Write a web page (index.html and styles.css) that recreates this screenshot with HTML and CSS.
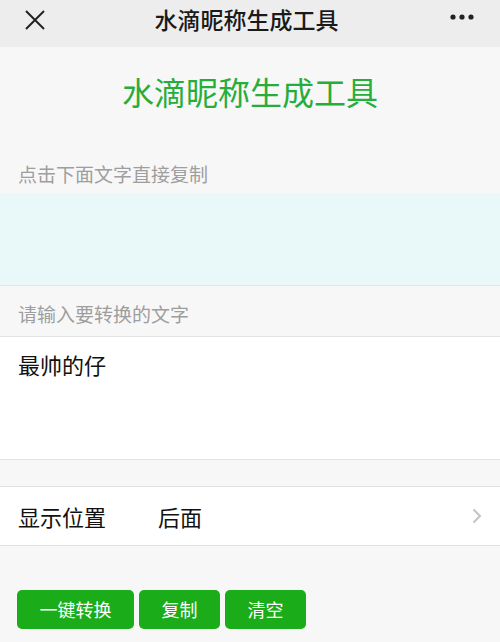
FILE: index.html
```html
<!DOCTYPE html>
<html lang="zh-CN">
<head>
<meta charset="utf-8">
<title>水滴昵称生成工具</title>
<link rel="stylesheet" href="styles.css">
</head>
<body>
<header class="navbar">
  <span class="nav-close">
    <svg width="20" height="20" viewBox="0 0 20 20"><path d="M1 1 L19 19 M19 1 L1 19" stroke="#222" stroke-width="2" fill="none"/></svg>
  </span>
  <span class="nav-title">水滴昵称生成工具</span>
  <span class="nav-more">
    <svg width="24" height="6" viewBox="0 0 24 6"><circle cx="3" cy="3" r="2.6" fill="#222"/><circle cx="12" cy="3" r="2.6" fill="#222"/><circle cx="21" cy="3" r="2.6" fill="#222"/></svg>
  </span>
</header>
<main>
  <h1 class="title">水滴昵称生成工具</h1>
  <div class="hint hint-first">点击下面文字直接复制</div>
  <div class="result"></div>
  <div class="hint hint-second">请输入要转换的文字</div>
  <div class="input-box">最帅的仔</div>
  <div class="cell">
    <span class="cell-label">显示位置</span>
    <span class="cell-value">后面</span>
    <svg class="cell-arrow" width="10" height="16" viewBox="0 0 10 16"><path d="M1.5 1.5 L8 8 L1.5 14.5" stroke="#c4c4c8" stroke-width="2" fill="none"/></svg>
  </div>
  <div class="actions">
    <button class="btn">一键转换</button>
    <button class="btn">复制</button>
    <button class="btn">清空</button>
  </div>
</main>
</body>
</html>
```
FILE: styles.css
```css
html, body {
  margin: 0;
  padding: 0;
  background: #f7f7f7;
  font-family: "Noto Sans CJK SC", "Noto Sans", sans-serif;
  color: #111;
}
.navbar {
  height: 47px;
  background: #ededed;
  display: flex;
  align-items: center;
  justify-content: space-between;
  padding: 0 26px 0 25px;
}
.nav-close, .nav-more {
  display: flex;
  width: 24px;
}
.nav-close svg { margin-top: -8px; }
.nav-more svg { margin-top: -10px; }
.nav-title {
  font-size: 23px;
  font-weight: 500;
  color: #1a1a1a;
  margin-top: -10px;
  margin-right: 6px;
}
main { display: block; }
.title {
  margin: 0;
  padding-top: 22px;
  line-height: 45px;
  font-size: 32px;
  font-weight: 400;
  color: #27ad3a;
  text-align: center;
}
.hint {
  font-size: 19px;
  line-height: 26px;
  color: #9e9e9e;
  padding: 0 18px;
}
.hint-first {
  padding-top: 47px;
  padding-bottom: 6px;
}
.result {
  height: 92px;
  background: #e9f8f8;
  border-bottom: 1px solid #dfe6e8;
}
.hint-second {
  padding-top: 15px;
  padding-bottom: 9px;
  border-bottom: 1px solid #e2e2e2;
}
.input-box {
  background: #fff;
  height: 110px;
  padding: 12px 18px 0;
  font-size: 22px;
  line-height: 30px;
  color: #111;
  border-bottom: 1px solid #e2e2e2;
}
.cell {
  margin-top: 26px;
  background: #fff;
  border-top: 1px solid #e2e2e2;
  border-bottom: 1px solid #e2e2e2;
  height: 58px;
  display: flex;
  align-items: center;
  padding: 0 18px;
  font-size: 22px;
}
.cell-label { width: 140px; }
.cell-value { flex: 1; }
.actions {
  display: flex;
  gap: 5px;
  padding: 44px 17px 0;
}
.btn {
  height: 39px;
  padding: 0 22.5px;
  border: none;
  border-radius: 5px;
  background: #1aad19;
  color: #fff;
  font-family: "Noto Sans CJK SC", "Noto Sans", sans-serif;
  font-size: 18px;
  line-height: 39px;
}
```
